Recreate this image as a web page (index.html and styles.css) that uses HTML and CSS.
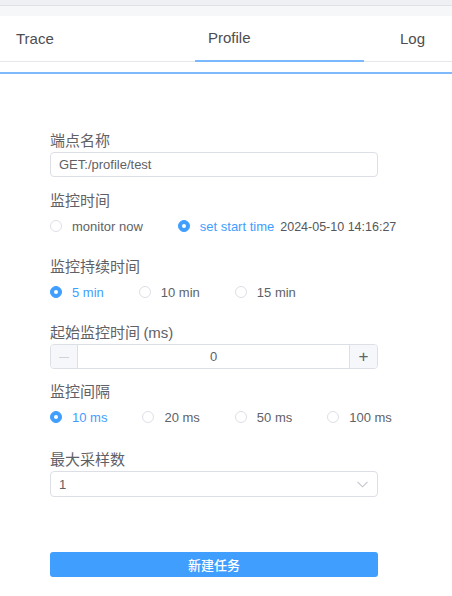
FILE: index.html
```html
<!DOCTYPE html>
<html lang="zh">
<head>
<meta charset="utf-8">
<title>Profile</title>
<link rel="stylesheet" href="styles.css">
</head>
<body>
<div class="chrome-top"></div>
<div class="chrome-sub"></div>
<div class="tabs">
  <div class="tab tab-trace">Trace</div>
  <div class="tab tab-profile active">Profile</div>
  <div class="tab tab-log">Log</div>
</div>
<div class="tab-gap"></div>
<div class="blue-line"></div>

<form class="form">
  <div class="field field-input">
    <div class="label">端点名称</div>
    <div class="input">GET:/profile/test</div>
  </div>

  <div class="field field-radio">
    <div class="label">监控时间</div>
    <div class="radio-row">
      <span class="radio"><span class="dot"></span><span class="rtext">monitor now</span></span>
      <span class="radio checked last"><span class="dot"></span><span class="rtext">set start time</span></span>
      <span class="date">2024-05-10 14:16:27</span>
    </div>
  </div>

  <div class="field field-radio">
    <div class="label">监控持续时间</div>
    <div class="radio-row">
      <span class="radio checked"><span class="dot"></span><span class="rtext">5 min</span></span>
      <span class="radio"><span class="dot"></span><span class="rtext">10 min</span></span>
      <span class="radio"><span class="dot"></span><span class="rtext">15 min</span></span>
    </div>
  </div>

  <div class="field field-input field-num">
    <div class="label">起始监控时间 <span class="latin">(ms)</span></div>
    <div class="number">
      <span class="num-btn minus">&#8212;</span>
      <span class="num-val">0</span>
      <span class="num-btn plus">+</span>
    </div>
  </div>

  <div class="field field-radio field-interval">
    <div class="label">监控间隔</div>
    <div class="radio-row">
      <span class="radio checked"><span class="dot"></span><span class="rtext">10 ms</span></span>
      <span class="radio"><span class="dot"></span><span class="rtext">20 ms</span></span>
      <span class="radio"><span class="dot"></span><span class="rtext">50 ms</span></span>
      <span class="radio"><span class="dot"></span><span class="rtext">100 ms</span></span>
    </div>
  </div>

  <div class="field field-input">
    <div class="label">最大采样数</div>
    <div class="input select">
      <span>1</span>
      <svg class="chev" width="11" height="7" viewBox="0 0 11 7"><path d="M0.5 0.8 L5.5 5.8 L10.5 0.8" fill="none" stroke="#c0c4cc" stroke-width="1.1"/></svg>
    </div>
  </div>

  <div class="btn">新建任务</div>
</form>
</body>
</html>
```

FILE: styles.css
```css
html, body {
  margin: 0;
  padding: 0;
  background: #ffffff;
}
body {
  font-family: "Liberation Sans", Arial, "Noto Sans CJK SC", sans-serif;
  color: #606266;
  width: 452px;
  overflow: hidden;
}
.chrome-top {
  height: 5px;
  background: #eef0f3;
  border-bottom: 1px solid #dfe2e6;
}
.chrome-sub {
  height: 10px;
  background: #f6f7f9;
}
.tabs {
  display: flex;
  height: 45px;
  border-bottom: 1px solid #e6e8ec;
}
.tab {
  box-sizing: border-box;
  height: 46px;
  line-height: 45px;
  font-size: 15px;
  color: #4d4d4f;
  white-space: nowrap;
}
.tab-trace {
  width: 195px;
  padding-left: 16px;
}
.tab-profile {
  width: 169px;
  padding-left: 13px;
}
.tab-log {
  flex: 1;
  padding-left: 36px;
}
.tab.active {
  border-bottom: 2px solid #7ab8ff;
  line-height: 44px;
}
.tab-gap {
  height: 10px;
}
.blue-line {
  height: 2px;
  background: #7db9fb;
}
.form {
  display: block;
  margin: 0;
  padding: 56px 0 0 50px;
  width: 328px;
}
.field {
  display: flex;
  flex-direction: column;
}
.field-input {
  gap: 2px;
  margin-bottom: 13px;
}
.field-num {
  margin-bottom: 12px;
}
.field-radio {
  gap: 6px;
  margin-bottom: 20px;
}
.field-radio:first-of-type {
  gap: 7px;
}
.field-interval {
  margin-bottom: 22px;
}
.label {
  font-family: "Noto Sans CJK SC", "Liberation Sans", sans-serif;
  font-size: 15px;
  line-height: 20px;
  height: 20px;
  color: #5f6166;
  white-space: nowrap;
}
.label .latin {
  font-family: "Liberation Sans", Arial, sans-serif;
}
.input {
  box-sizing: border-box;
  height: 25px;
  border: 1px solid #dcdfe6;
  border-radius: 4px;
  padding-left: 8px;
  font-size: 13px;
  line-height: 23px;
  color: #606266;
}
.select {
  display: flex;
  align-items: center;
  justify-content: space-between;
  padding-right: 9px;
  height: 26px;
}
.chev {
  display: block;
  margin-top: 1px;
}
.radio-row {
  display: flex;
  align-items: center;
  height: 20px;
  white-space: nowrap;
}
.radio {
  display: flex;
  align-items: center;
  margin-right: 35px;
}
.radio.last {
  margin-right: 0;
}
.dot {
  box-sizing: border-box;
  width: 12px;
  height: 12px;
  border-radius: 50%;
  border: 1px solid #dcdfe6;
  background: #fff;
  position: relative;
}
.radio.checked .dot {
  background: #409eff;
  border-color: #409eff;
}
.radio.checked .dot::after {
  content: "";
  position: absolute;
  left: 3px;
  top: 3px;
  width: 4px;
  height: 4px;
  border-radius: 50%;
  background: #fff;
}
.rtext {
  padding-left: 10px;
  font-size: 13px;
  color: #606266;
}
.radio.checked .rtext {
  color: #409eff;
}
.date {
  margin-left: 6px;
  font-size: 12.5px;
  color: #55575c;
  padding-top: 2px;
}
.number {
  box-sizing: border-box;
  height: 25px;
  border: 1px solid #dcdfe6;
  border-radius: 4px;
  display: flex;
  font-size: 13px;
  color: #606266;
}
.num-btn {
  width: 26px;
  background: #f5f7fa;
  display: flex;
  align-items: center;
  justify-content: center;
}
.minus {
  border-right: 1px solid #dcdfe6;
  border-radius: 3px 0 0 3px;
  color: #c8cbd1;
  font-size: 10px;
}
.plus {
  border-left: 1px solid #dcdfe6;
  border-radius: 0 3px 3px 0;
  color: #606266;
  font-size: 17px;
  width: 27px;
}
.num-val {
  flex: 1;
  text-align: center;
  line-height: 23px;
}
.btn {
  margin-top: 55px;
  height: 25px;
  background: #409eff;
  border-radius: 3px;
  color: #ffffff;
  text-align: center;
  font-family: "Noto Sans CJK SC", sans-serif;
  font-size: 13px;
  font-weight: 500;
  line-height: 25px;
}
```
